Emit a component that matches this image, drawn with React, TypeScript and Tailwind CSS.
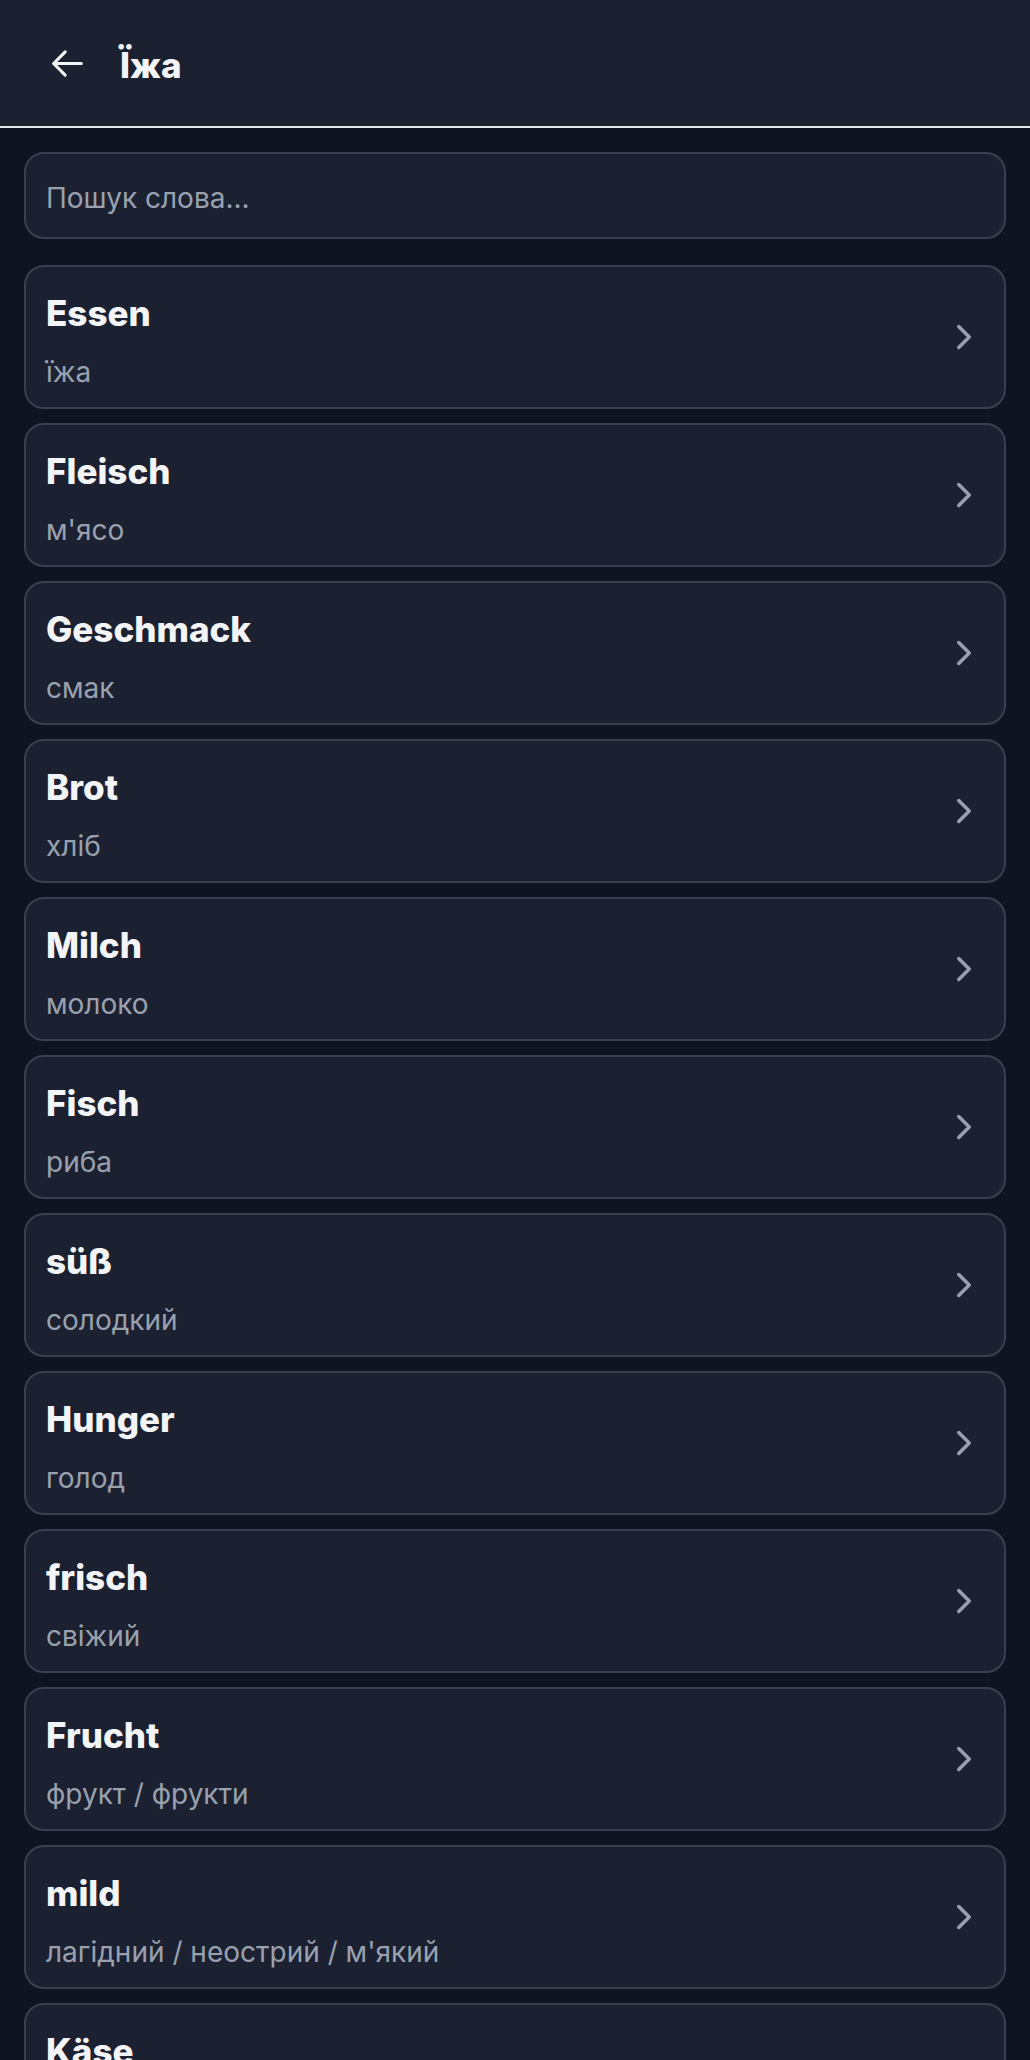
import { ChevronRight } from 'lucide-react'

const words = [
  { de: 'Essen', uk: 'їжа' },
  { de: 'Fleisch', uk: "м'ясо" },
  { de: 'Geschmack', uk: 'смак' },
  { de: 'Brot', uk: 'хліб' },
  { de: 'Milch', uk: 'молоко' },
  { de: 'Fisch', uk: 'риба' },
  { de: 'süß', uk: 'солодкий' },
  { de: 'Hunger', uk: 'голод' },
  { de: 'frisch', uk: 'свіжий' },
  { de: 'Frucht', uk: 'фрукт / фрукти' },
  { de: 'mild', uk: "лагідний / неострий / м'який" },
  { de: 'Käse', uk: 'сир' },
]

function BackArrow() {
  return (
    <svg width="37" height="37" viewBox="0 0 24 24" fill="none" stroke="currentColor" strokeWidth={2} strokeLinecap="round" strokeLinejoin="round">
      <path d="M10.5 19.5 3 12m0 0 7.5-7.5M3 12h18" />
    </svg>
  )
}

export default function App() {
  return (
    <div className="min-h-screen bg-[#0f1421] font-['Inter',sans-serif]">
      <header className="flex h-[128px] items-center border-b-2 border-gray-200 bg-[#1c2132] pl-[49px]">
        <button className="text-gray-100">
          <BackArrow />
        </button>
        <h1 className="ml-[34px] mt-1 text-[35px] font-extrabold text-gray-100">Їжа</h1>
      </header>

      <main className="flex flex-col gap-[14px] px-6 pt-6">
        <input
          type="text"
          placeholder="Пошук слова..."
          className="mb-3 h-[87px] rounded-[20px] border-2 border-[#394151] bg-[#1c2132] px-5 pt-[4px] text-[28px] text-gray-100 placeholder:text-gray-400 outline-none"
        />
        {words.map((w) => (
          <div
            key={w.de}
            className="flex h-[144px] items-center justify-between rounded-[20px] border-2 border-[#394151] bg-[#1c2132] pl-5 pr-[19px]"
          >
            <div className="flex flex-col pt-2">
              <span className="text-[35px] leading-10 font-extrabold text-gray-100">{w.de}</span>
              <span className="mt-[21px] text-[28px] leading-9 text-gray-400">{w.uk}</span>
            </div>
            <ChevronRight size={42} className="text-gray-400" strokeWidth={2} />
          </div>
        ))}
      </main>
    </div>
  )
}
